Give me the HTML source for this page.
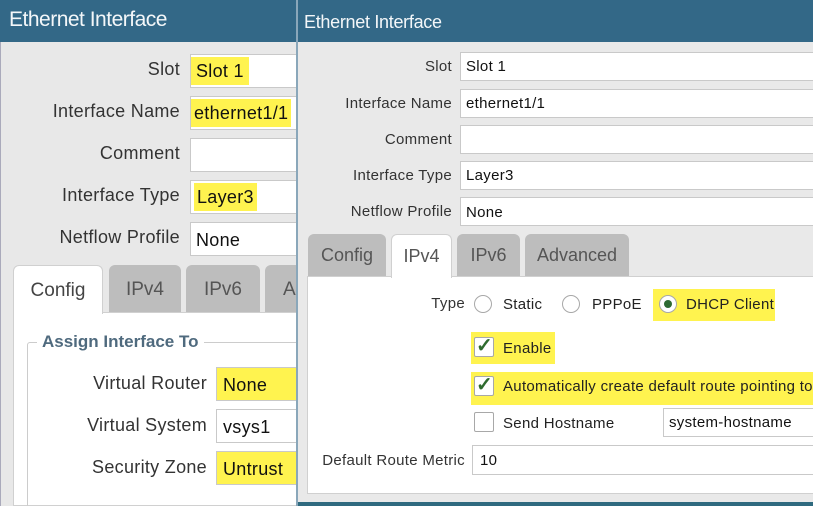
<!DOCTYPE html>
<html><head><style>
*{margin:0;padding:0;box-sizing:border-box}
html,body{width:813px;height:506px;overflow:hidden}
body{background:#e9e9e9;font-family:"Liberation Sans",sans-serif;position:relative}
.a{position:absolute}
.hdr{background:#336887;color:#f4f7f9}
.lbl{position:absolute;text-align:right;color:#333;white-space:nowrap}
.inp{position:absolute;background:#fff;border:1px solid #c9c9c9;color:#111;white-space:nowrap;overflow:hidden}
.hl{background:#fff34f}
.tab{position:absolute;background:#bdbdbd;border-radius:6px 6px 0 0;color:#555;text-align:center}
.tabw{background:#fff;border:1px solid #d0d0d0;border-bottom:none}
.rad{position:absolute;width:14px;height:14px;border:1px solid #a8a8a8;border-radius:50%;background:#fff}
.cb{position:absolute;width:20px;height:20px;border:1px solid #a8a8a8;border-radius:2px;background:#fff}
.t{position:absolute;white-space:nowrap;color:#222}
.L{font-size:18px;letter-spacing:0.3px}
.R{font-size:15px;letter-spacing:0.3px}
</style></head><body>
<!-- left panel -->
<div class="a hdr" style="left:0;top:0;width:297px;height:42px;font-size:21px;padding:8px 0 0 9px;letter-spacing:-0.5px">Ethernet Interface</div>
<div class="a" style="left:0;top:42px;width:297px;height:464px;background:#e8e8e8;border-left:1px solid #aab"></div>
<div class="lbl L" style="right:633px;top:59px">Slot</div>
<div class="inp L" style="left:190px;top:54px;width:110px;height:34px;padding:6px 0"><span class="hl" style="padding:4px 5px">Slot 1</span></div>
<div class="lbl L" style="right:633px;top:101px">Interface Name</div>
<div class="inp L" style="left:190px;top:96px;width:110px;height:34px;padding:6px 0"><span class="hl" style="padding:4px 3px">ethernet1/1</span></div>
<div class="lbl L" style="right:633px;top:143px">Comment</div>
<div class="inp" style="left:190px;top:138px;width:110px;height:34px"></div>
<div class="lbl L" style="right:633px;top:185px">Interface Type</div>
<div class="inp L" style="left:190px;top:180px;width:110px;height:34px;padding:6px 3px"><span class="hl" style="padding:4px 3px">Layer3</span></div>
<div class="lbl L" style="right:633px;top:227px">Netflow Profile</div>
<div class="inp L" style="left:190px;top:222px;width:110px;height:34px;padding:7px 5px">None</div>
<div class="a" style="left:13px;top:312px;width:290px;height:194px;background:#fff;border:1px solid #d0d0d0"></div>
<div class="tab tabw" style="left:13px;top:265px;width:90px;height:49px;font-size:19px;padding-top:14px;color:#444">Config</div>
<div class="tab" style="left:109px;top:265px;width:72px;height:47px;font-size:19px;padding-top:14px">IPv4</div>
<div class="tab" style="left:186px;top:265px;width:74px;height:47px;font-size:19px;padding-top:14px">IPv6</div>
<div class="tab" style="left:265px;top:265px;width:40px;height:47px;font-size:19px;padding-top:14px;text-align:left;padding-left:18px">A</div>
<div class="a" style="left:27px;top:342px;width:280px;height:170px;border:1px solid #ccc;border-radius:3px"></div>
<div class="a" style="left:37px;top:332px;background:#fff;padding:0 5px;font-size:17px;font-weight:bold;color:#4f6a7e">Assign Interface To</div>
<div class="lbl L" style="right:606px;top:373px">Virtual Router</div>
<div class="inp hl L" style="left:216px;top:367px;width:90px;height:34px;padding:7px 6px">None</div>
<div class="lbl L" style="right:606px;top:415px">Virtual System</div>
<div class="inp L" style="left:216px;top:409px;width:90px;height:34px;padding:7px 6px">vsys1</div>
<div class="lbl L" style="right:606px;top:457px">Security Zone</div>
<div class="inp hl L" style="left:216px;top:451px;width:90px;height:34px;padding:7px 6px">Untrust</div>
<!-- right panel -->
<div class="a" style="left:296px;top:0;width:517px;height:506px;background:#e9e9e9;border-left:2px solid #8aa7ba"></div>
<div class="a hdr" style="left:298px;top:0;width:515px;height:42px;font-size:18px;padding:12px 0 0 6px;letter-spacing:-0.3px">Ethernet Interface</div>
<div class="lbl R" style="right:361px;top:58px">Slot</div>
<div class="inp R" style="left:460px;top:52px;width:360px;height:29px;padding:5px 5px">Slot 1</div>
<div class="lbl R" style="right:361px;top:95px">Interface Name</div>
<div class="inp R" style="left:460px;top:89px;width:360px;height:29px;padding:5px 5px">ethernet1/1</div>
<div class="lbl R" style="right:361px;top:131px">Comment</div>
<div class="inp" style="left:460px;top:125px;width:360px;height:29px"></div>
<div class="lbl R" style="right:361px;top:167px">Interface Type</div>
<div class="inp R" style="left:460px;top:161px;width:360px;height:29px;padding:5px 5px">Layer3</div>
<div class="lbl R" style="right:361px;top:203px">Netflow Profile</div>
<div class="inp R" style="left:460px;top:197px;width:360px;height:29px;padding:6px 5px">None</div>
<div class="a" style="left:307px;top:276px;width:510px;height:218px;background:#fff;border:1px solid #d0d0d0"></div>
<div class="tab" style="left:308px;top:234px;width:78px;height:42px;font-size:18px;padding-top:11px">Config</div>
<div class="tab tabw" style="left:391px;top:234px;width:61px;height:44px;font-size:18px;padding-top:11px">IPv4</div>
<div class="tab" style="left:457px;top:234px;width:63px;height:42px;font-size:18px;padding-top:11px">IPv6</div>
<div class="tab" style="left:525px;top:234px;width:104px;height:42px;font-size:18px;padding-top:11px">Advanced</div>
<div class="lbl R" style="right:348px;top:295px">Type</div>
<div class="rad" style="left:474px;top:295px;width:18px;height:18px"></div>
<div class="t R" style="left:503px;top:296px">Static</div>
<div class="rad" style="left:562px;top:295px;width:18px;height:18px"></div>
<div class="t R" style="left:592px;top:296px">PPPoE</div>
<div class="a hl" style="left:653px;top:289px;width:122px;height:32px"></div>
<div class="rad" style="left:659px;top:295px;width:18px;height:18px"><div class="a" style="left:4px;top:4px;width:8px;height:8px;border-radius:50%;background:#2e6b33"></div></div>
<div class="t R" style="left:686px;top:296px">DHCP Client</div>
<div class="a hl" style="left:471px;top:332px;width:84px;height:32px"></div>
<div class="cb" style="left:474px;top:337px"></div>
<div class="t" style="left:476px;top:333px;font-size:20px;color:#2f6b2f;font-weight:bold">✓</div>
<div class="t R" style="left:503px;top:340px">Enable</div>
<div class="a hl" style="left:471px;top:372px;width:342px;height:33px"></div>
<div class="cb" style="left:474px;top:376px"></div>
<div class="t" style="left:476px;top:372px;font-size:20px;color:#2f6b2f;font-weight:bold">✓</div>
<div class="t R" style="left:503px;top:378px">Automatically create default route pointing to</div>
<div class="cb" style="left:474px;top:412px"></div>
<div class="t R" style="left:503px;top:415px">Send Hostname</div>
<div class="inp R" style="left:663px;top:408px;width:160px;height:29px;padding:5px 5px">system-hostname</div>
<div class="lbl R" style="right:348px;top:452px">Default Route Metric</div>
<div class="inp R" style="left:472px;top:445px;width:350px;height:30px;padding:6px 7px">10</div>
<div class="a" style="left:298px;top:502px;width:515px;height:4px;background:#2f6a7f"></div>
</body></html>
